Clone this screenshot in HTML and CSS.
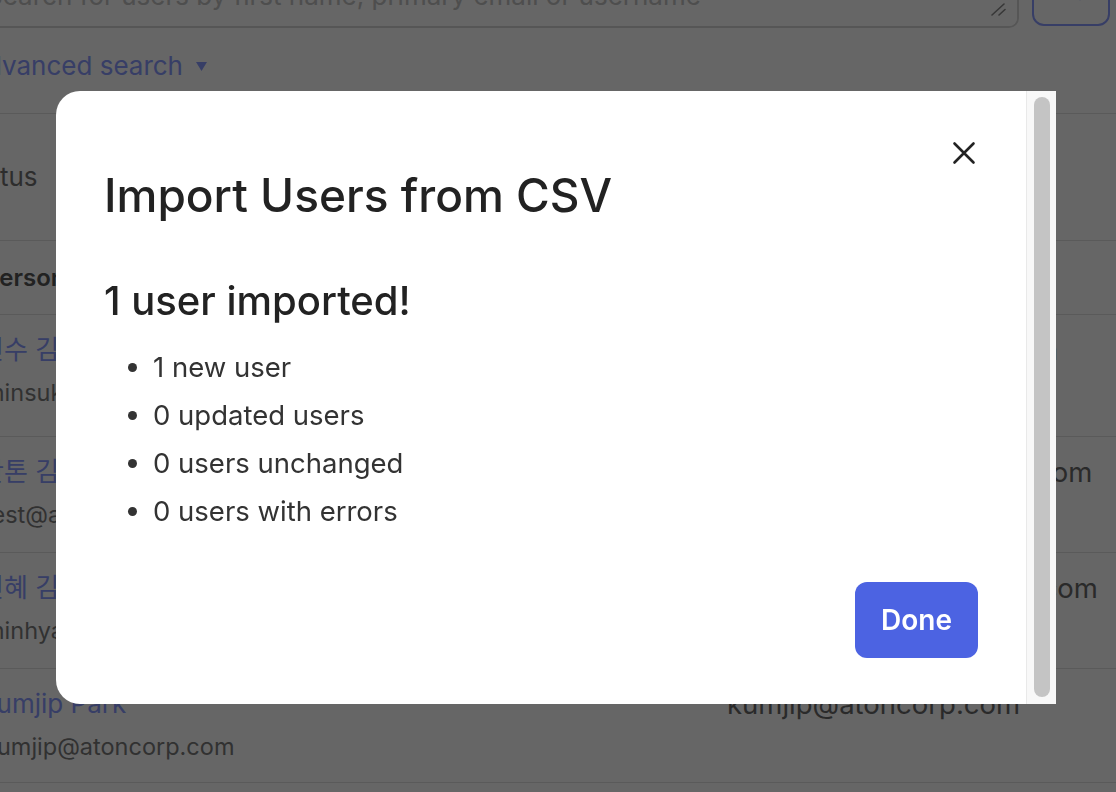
FILE: index.html
```html
<!DOCTYPE html>
<html lang="en">
<head>
<meta charset="utf-8">
<title>Users</title>
<link rel="stylesheet" href="styles.css">
</head>
<body>
<main class="page">
  <div class="search-row">
    <div class="search-field">
      <textarea class="search-input" placeholder="Search for users by first name, primary email or username"></textarea>
      <svg class="grip" width="16" height="14" viewBox="0 0 16 14" aria-hidden="true"><path d="M2 13 L14 2 M9 13 L15 7.5" stroke="#8a8a8a" stroke-width="1.6" stroke-linecap="round" fill="none"/></svg>
    </div>
    <button class="search-btn" aria-label="Search">
      <svg width="24" height="24" viewBox="0 0 24 24" aria-hidden="true"><circle cx="10" cy="10" r="7" stroke="#8a9bff" stroke-width="2.4" fill="none"/><path d="M15.5 15.5 L21 21" stroke="#8a9bff" stroke-width="2.4" stroke-linecap="round"/></svg>
    </button>
  </div>

  <button class="advanced-toggle">Advanced search
    <svg class="caret" width="11" height="9" viewBox="0 0 11 9" aria-hidden="true"><path d="M0 0 H11 L5.5 9 Z" fill="#8a9bff"/></svg>
  </button>

  <div class="filters">
    <span class="filter-label">Status</span>
  </div>

  <div class="users">
    <div class="users-head">
      <div class="cell">Person</div>
      <div class="cell">Email</div>
    </div>
    <div class="user-row user-row--tall">
      <div class="cell">
        <a class="user-name">민수 김</a>
        <div class="user-sub">minsuk@atoncorp.com</div>
      </div>
      <div class="cell user-email">minsukim@atoncorp.com</div>
    </div>
    <div class="user-row">
      <div class="cell">
        <a class="user-name">안톤 김</a>
        <div class="user-sub">test@atoncorp.com</div>
      </div>
      <div class="cell user-email">anton.test01@atoncorp.com</div>
    </div>
    <div class="user-row">
      <div class="cell">
        <a class="user-name">민혜 김</a>
        <div class="user-sub">minhyae@atoncorp.com</div>
      </div>
      <div class="cell user-email">minhyae.kim@atoncorp.com</div>
    </div>
    <div class="user-row user-row--short">
      <div class="cell">
        <a class="user-name">Kumjip Park</a>
        <div class="user-sub">kumjip@atoncorp.com</div>
      </div>
      <div class="cell user-email">kumjip@atoncorp.com</div>
    </div>
  </div>
</main>

<div class="overlay">
  <div class="modal" role="dialog" aria-labelledby="import-title">
    <div class="modal-body">
      <button class="modal-close" aria-label="Close">
        <svg width="24" height="24" viewBox="0 0 24 24" aria-hidden="true"><path d="M2.5 2.5 L21.5 21.5 M21.5 2.5 L2.5 21.5" stroke="#222" stroke-width="2.6" stroke-linecap="round"/></svg>
      </button>
      <h2 class="modal-title" id="import-title">Import Users from CSV</h2>
      <h3 class="result-title">1 user imported!</h3>
      <ul class="result-list">
        <li>1 new user</li>
        <li>0 updated users</li>
        <li>0 users unchanged</li>
        <li>0 users with errors</li>
      </ul>
      <div class="modal-actions">
        <button class="btn-primary">Done</button>
      </div>
    </div>
    <div class="scrollbar" aria-hidden="true"><div class="scrollbar-thumb"></div></div>
  </div>
</div>
</body>
</html>
```

FILE: styles.css
```css
* { box-sizing: border-box; }

html, body {
  margin: 0;
  height: 100%;
}

body {
  font-family: Inter, "Noto Sans", "Noto Sans CJK KR", sans-serif;
  background: #fff;
  color: #222;
  overflow: hidden;
}

button {
  font-family: inherit;
  cursor: pointer;
}

/* ---------- background page ---------- */
.page {
  margin: -40px 0 0 -32px;
  width: 1240px;
}

.search-row {
  display: flex;
  align-items: flex-start;
  gap: 13px;
}

.search-field {
  position: relative;
  width: 1051px;
}

.search-input {
  display: block;
  width: 100%;
  height: 68px;
  border: 2px solid #d6d6d6;
  border-radius: 10px;
  padding: 16px;
  font: 26px/36px Inter, sans-serif;
  color: #222;
  resize: none;
  background: #fff;
}

.search-input::placeholder {
  color: #c2c2c2;
}

.grip {
  position: absolute;
  right: 13px;
  bottom: 12px;
}

.search-btn {
  width: 78px;
  height: 66px;
  border: 2px solid #8a9bff;
  border-radius: 12px;
  background: #fff;
  display: grid;
  place-items: center;
  padding: 0 0 6px;
}

.advanced-toggle {
  margin: 20px 0 29px;
  padding: 0;
  border: 0;
  background: none;
  font: 26px/36px Inter, sans-serif;
  color: #8a9bff;
  display: flex;
  align-items: center;
  gap: 13px;
}

.filters {
  border-top: 1px solid #e2e2e2;
  height: 127px;
  display: flex;
  align-items: center;
}

.filter-label {
  font-size: 26px;
  line-height: 36px;
  color: #727272;
  margin-left: -8px;
}

.users-head,
.user-row {
  display: grid;
  grid-template-columns: 743px 1fr;
  border-top: 1px solid #e2e2e2;
}

.users-head {
  height: 74px;
  align-items: center;
  font-size: 24px;
  font-weight: 600;
  color: #555;
}

.cell {
  padding-left: 16px;
  white-space: nowrap;
}

.user-row {
  height: 116px;
  padding-top: 17px;
}

.user-row--tall { height: 122px; }
.user-row--short {
  height: 115px;
  border-bottom: 1px solid #e2e2e2;
}

.user-name {
  display: block;
  margin-left: -4px;
  font-size: 26px;
  line-height: 36px;
  color: #8a9bff;
}

.user-sub {
  margin-top: 9px;
  font-size: 23.5px;
  line-height: 32px;
  color: #7c7c7c;
}

.user-email {
  font-size: 27.5px;
  line-height: 36px;
  color: #6a6a6a;
}

/* ---------- modal ---------- */
.overlay {
  position: fixed;
  inset: 0;
  background: rgba(0, 0, 0, 0.6);
  display: flex;
  align-items: center;
  justify-content: center;
  padding: 2px 4px 0 0;
}

.modal {
  width: 1000px;
  height: 613px;
  background: #fff;
  border-radius: 24px 0 0 24px;
  display: flex;
  overflow: hidden;
}

.modal-body {
  flex: 1;
  position: relative;
  padding: 48px 48px 46px;
  display: flex;
  flex-direction: column;
}

.modal-close {
  position: absolute;
  top: 42px;
  right: 42px;
  width: 40px;
  height: 40px;
  padding: 0;
  border: 0;
  background: none;
  display: grid;
  place-items: center;
}

.modal-title {
  margin: 28px 0 0;
  font-size: 46px;
  line-height: 56px;
  font-weight: 500;
  color: #222;
}

.result-title {
  margin: 54px 0 0;
  font-size: 40px;
  line-height: 48px;
  font-weight: 500;
  color: #222;
}

.result-list {
  margin: 18px 0 0;
  padding-left: 49px;
  font-size: 27.5px;
  line-height: 48px;
  color: #333;
}

.modal-actions {
  margin-top: auto;
  display: flex;
  justify-content: flex-end;
}

.btn-primary {
  width: 123px;
  height: 76px;
  border: 0;
  border-radius: 12px;
  background: #4c63e2;
  color: #fff;
  font-size: 28px;
  font-weight: 600;
}

.scrollbar {
  flex: none;
  width: 30px;
  background: #f8f8f8;
  border-left: 1px solid #e9e9e9;
  padding: 6px 6px 7px 7px;
  display: flex;
}

.scrollbar-thumb {
  flex: 1;
  background: #c4c4c4;
  border-radius: 8px;
}
```
